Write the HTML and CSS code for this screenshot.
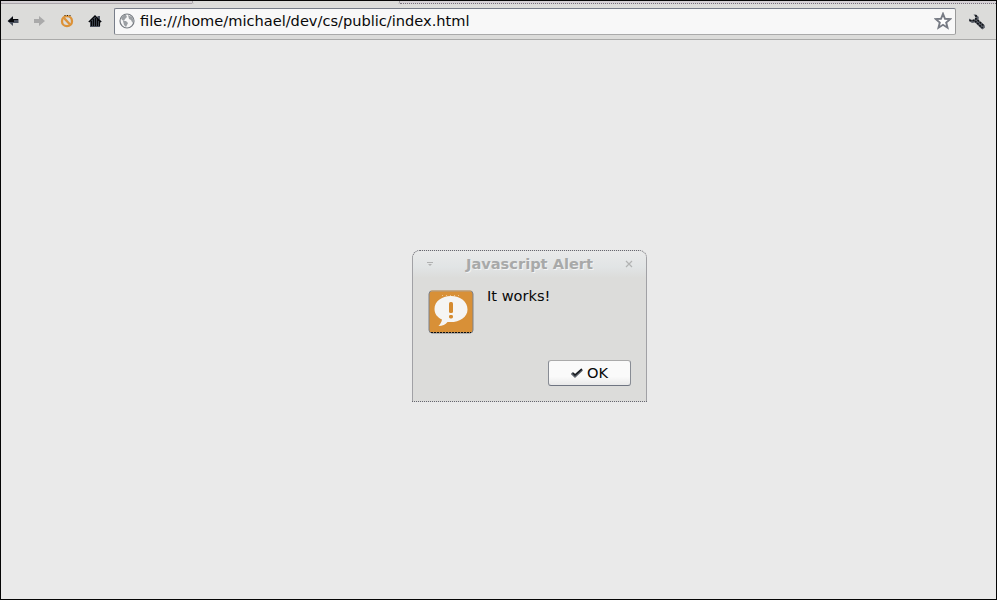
FILE: index.html
```
<!DOCTYPE html>
<html lang="en">
<head>
<meta charset="utf-8">
<title>index.html</title>
<link rel="stylesheet" href="styles.css">
</head>
<body>
<div class="window">
  <div class="tabs"><div class="strip left"></div><div class="tab"></div><div class="strip right"></div></div>
  <header class="toolbar">
    <nav class="nav">
      <svg width="12" height="12" viewBox="0 0 12 12"><path d="M.5 6 6 1v3h5.500v4H6v3z" fill="#4a515e"/><path d="M1 6 6 1.500V4h5v1H7v2H2z" fill="#08090c"/></svg>
      <svg width="12" height="12" viewBox="0 0 12 12"><path d="M12 6 6 1v3H1v4h5v3z" fill="#aaa"/></svg>
      <svg width="14" height="14" viewBox="0 0 14 14"><circle cx="7" cy="7.200" r="5" fill="none" stroke="#dc9238" stroke-width="2.300"/><path d="m4 4 6 6.500" stroke="#dc9238" stroke-width="2.400"/><path d="M4.500 1.500h1M7 1.500h1M9.500 1.500h1" stroke="#33240f"/></svg>
      <svg width="14" height="12" viewBox="0 0 14 12"><path d="M0 7 7 0l2.500 2.400V1H12v4l2 2h-2v5H2V7z" fill="#4b515e"/><path d="M1 7 7 1l6 6M3.500 6v5M5.500 4v7M7.500 3v8M9.500 4v7M11.500 6v5" fill="none" stroke="#050608" stroke-width="1.200"/></svg>
    </nav>
    <div class="address">
      <svg width="16" height="16" viewBox="0 0 16 16"><circle cx="8" cy="8" r="7" fill="#f7f7f7" stroke="#777c82" stroke-width="1.200"/><path d="M2 5 5 2l2 0 1 2-2 2-1 2-2-1zM4 8l3 0 2 2-1 2-1 2-2-2zM9 2l4 2 1.500 3-1 3-1.500-3-2-1z" fill="#9b9fa3"/></svg>
      <span class="url">file:///home/michael/dev/cs/public/index.html</span>
      <svg class="star" width="18" height="18" viewBox="0 0 18 18"><path d="m9 1.800 2 5 5.200.3-4 3.400 1.300 5.200L9 12.800l-4.500 2.900 1.300-5.200-4-3.400L7 6.800z" fill="#fff" stroke="#777b84" stroke-width="1.900"/></svg>
    </div>
    <svg class="wrench" width="18" height="18" viewBox="0 0 18 18"><path d="M1 5.500V8l3 2 3-.5 5.500 5.500 2 1.500 2.500-2-.5-2.500-6-5 .3-3L8 1.500H5.500L7.500 4 6.500 6.500 3.500 7z" fill="#5a5f69"/><path d="M1.500 7.500h4L8 6l0-4M7 8l7.500 7M9.500 7l6.500 6" fill="none" stroke="#101216" stroke-width="1.500" stroke-dasharray="2 1"/></svg>
  </header>
  <main class="page">
    <section class="dialog" role="dialog">
      <div class="title">
        <svg width="8" height="6" viewBox="0 0 8 6"><path d="M1 1.500h6M2.500 3.500h3M3.500 4.500h1" stroke="#b0b1b1"/></svg>
        <span class="caption">Javascript Alert</span>
        <svg width="8" height="8" viewBox="0 0 8 8"><path d="m1 1 6 6M7 1 1 7" stroke="#b2b3b3" stroke-width="1.200"/></svg>
      </div>
      <div class="body">
        <svg width="46" height="44" viewBox="0 0 46 44"><rect x="1" y="1" width="44" height="42" rx="3" fill="#d89037" stroke="#7c818a"/><path d="M2.500 1h41" stroke="#dfa65f"/><path d="M3 42.500h40" stroke="#111" stroke-dasharray="2 1"/><path d="M14 5.500h20" stroke="#efc58d" stroke-dasharray="1 3"/><path d="M23 6C13.500 6 6.500 11.500 6.500 19c0 5 3 8.500 7.500 10.500-.3 2.500-1.500 4.300-3.500 6.500 4 0 7-1.500 9-4 11.500 1 20-4.500 20-12.500C39.500 11.500 32.500 6 23 6z" fill="#f5f5f4"/><rect x="21" y="12" width="4" height="11" rx="1.500" fill="#d58b30"/><rect x="21" y="25" width="4" height="3.500" rx="1.400" fill="#d58b30"/></svg>
        <p class="message">It works!</p>
      </div>
      <div class="actions">
        <button class="ok"><svg width="12" height="10" viewBox="0 0 12 10"><path d="M.8 5 4 8 11 1.500" fill="none" stroke="#5c626b" stroke-width="2.800"/><path d="M2 5 4 7 11 1" fill="none" stroke="#15181c" stroke-width="1.500"/></svg><span>OK</span></button>
      </div>
    </section>
  </main>
</div>
</body>
</html>
```
FILE: styles.css
```
* { box-sizing: border-box; }
body { margin: 0; background: #eaeaea; font-family: "DejaVu Sans", sans-serif; font-size: 14.6px; color: #080808; overflow: hidden; }
svg { display: block; flex: none; }
.window { width: 997px; height: 600px; border: 1px solid #050505; display: flex; flex-direction: column; }
.tabs { height: 3px; display: flex; background: #dcdcda; }
.strip { border-bottom: 1px solid #aaa5aa; background: #d5d1d5; }
.left { width: 191px; }
.tab { width: 208px; border: solid #a5a1a5; border-width: 0 1px; border-radius: 0 0 2px 2px; }
.right { flex: 1; border-bottom-style: dotted; border-bottom-color: #77717b; }
.toolbar { height: 36px; flex: none; display: flex; align-items: flex-start; background: #dcdcda; border-bottom: 1px solid #aaaaa9; padding-left: 6px; }
.nav { width: 107px; height: 34px; display: flex; align-items: center; }
.nav svg:nth-child(2) { margin-left: 14px; }
.nav svg:nth-child(3) { margin-left: 15px; }
.nav svg:nth-child(4) { margin-left: 14px; }
.address { width: 842px; height: 27px; margin-top: 4px; display: flex; align-items: center; background: #f8f8f8; border: 1px solid #777d89; border-right-color: #999; border-bottom-color: #aaa; border-radius: 2px; padding: 0 3px 1px 4px; }
.url { margin-left: 5px; line-height: 17px; padding-bottom: 1px; white-space: nowrap; }
.star { margin-left: auto; }
.wrench { margin: 9px 0 0 12px; }
.page { flex: 1; padding: 210px 0 0 411px; }
.dialog { width: 235px; height: 152px; border: 1px dotted #666670; border-radius: 8px 8px 0 0; background: #dcdcda; }
.title { height: 27px; display: flex; align-items: center; justify-content: space-between; padding: 0 13px 2px; border-radius: 7px 7px 0 0; background: linear-gradient(#e9eaea, #e1e4e5 60%, #dcdcda); }
.caption { font-weight: bold; line-height: 17px; color: #a8a9a9; text-shadow: 1px 1px #f3f3f3; white-space: nowrap; }
.body { height: 82px; display: flex; padding: 12px 15px 0; }
.message { margin: -2px 0 0 13px; line-height: 16px; }
.actions { display: flex; justify-content: flex-end; padding-right: 15px; }
.ok { width: 83px; height: 26px; display: flex; align-items: center; justify-content: center; gap: 4px; font: 14.6px/16px "DejaVu Sans", sans-serif; color: #080808; background: linear-gradient(#fafafa 65%, #e9e9e9); border: 1px solid #888c94; border-top-color: #aaa; border-bottom-color: #6f7582; border-radius: 3px; padding: 0; }
```
